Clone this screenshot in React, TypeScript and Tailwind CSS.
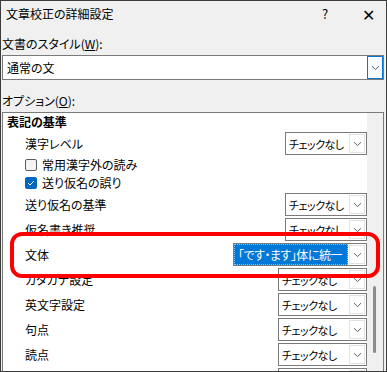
import React from "react";

type Row =
  | { kind: "header"; label: string }
  | { kind: "select"; label: string; value: string; width: number; selected?: boolean }
  | { kind: "check"; label: string; checked: boolean };

const rows: Row[] = [
  { kind: "header", label: "表記の基準" },
  { kind: "select", label: "漢字レベル", value: "チェックなし", width: 82 },
  { kind: "check", label: "常用漢字外の読み", checked: false },
  { kind: "check", label: "送り仮名の誤り", checked: true },
  { kind: "select", label: "送り仮名の基準", value: "チェックなし", width: 82 },
  { kind: "select", label: "仮名書き推奨", value: "チェックなし", width: 82 },
  { kind: "select", label: "文体", value: "「です・ます」体に統一", width: 134, selected: true },
  { kind: "select", label: "カタカナ設定", value: "チェックなし", width: 89 },
  { kind: "select", label: "英文字設定", value: "チェックなし", width: 89 },
  { kind: "select", label: "句点", value: "チェックなし", width: 89 },
  { kind: "select", label: "読点", value: "チェックなし", width: 89 },
  { kind: "select", label: "記号の使い方", value: "チェックなし", width: 89 },
];

function Chevron() {
  return (
    <svg width="9" height="6" viewBox="0 0 9 6" fill="none">
      <path d="M1 1.2 L4.5 4.6 L8 1.2" stroke="#606060" strokeWidth="1" />
    </svg>
  );
}

function Select({ value, width, selected }: { value: string; width: number; selected?: boolean }) {
  return (
    <div
      className="flex h-[23px] border border-[#7a7a7a] bg-white text-[11px] tracking-[-0.5px]"
      style={{ width }}
    >
      {selected ? (
        <div className="flex-1 flex items-center pl-[3px] bg-[#0078d7] text-white text-[12px] border border-dotted border-[#9cc3ea] whitespace-nowrap overflow-hidden">
          {value}
        </div>
      ) : (
        <div className="flex-1 flex items-center pl-[3px] whitespace-nowrap overflow-hidden">{value}</div>
      )}
      <div className="w-[16px] m-px border border-[#e2e2e2] bg-white flex items-center justify-center">
        <Chevron />
      </div>
    </div>
  );
}

function CheckBox({ checked }: { checked: boolean }) {
  if (checked) {
    return (
      <div className="w-[12px] h-[12px] rounded-[2px] bg-[#0067c0] flex items-center justify-center">
        <svg width="8" height="6" viewBox="0 0 8 6" fill="none">
          <path d="M1 3 L3 5 L7 1" stroke="white" strokeWidth="1" />
        </svg>
      </div>
    );
  }
  return <div className="w-[12px] h-[12px] rounded-[2px] border border-[#5c5c5c] bg-[#f4f4f4]" />;
}

export default function App() {
  return (
    <div className="relative w-[387px] h-[372px] overflow-hidden bg-[#f0f0f0] border border-[#3c3c3c] text-[12px] leading-[16px] text-black font-['Meiryo_UI','Noto_Sans_CJK_JP',sans-serif] [font-feature-settings:'palt']">
      {/* タイトルバー */}
      <div className="flex items-center h-[26px] pl-[5px]">
        <span className="flex-1">文章校正の詳細設定</span>
        <span className="w-[40px] text-[13px]">?</span>
        <span className="w-[24px] text-[16px] font-light">✕</span>
      </div>

      {/* 文書のスタイル */}
      <div className="h-[28px] pt-[9px] pl-[1px]">
        文書のスタイル(<span className="underline">W</span>):
      </div>
      <div className="ml-[1px] w-[382px] h-[25px] flex border border-[#7a7a7a] bg-white">
        <div className="flex-1 flex items-center pl-[4px]">通常の文</div>
        <div className="w-[16px] border border-[#0078d7] bg-[#f7fbff] flex items-center justify-center">
          <Chevron />
        </div>
      </div>

      {/* オプション */}
      <div className="h-[32px] pt-[13px] pl-[1px]">
        オプション(<span className="underline">O</span>):
      </div>
      <div className="ml-[1px] w-[382px] h-[300px] flex border border-[#7a7a7a] bg-white">
        <div className="flex-1 flex flex-col">
          {rows.map((row, i) => {
            if (row.kind === "header") {
              return (
                <div key={i} className="h-[18px] flex items-center pl-[4px] font-bold">
                  {row.label}
                </div>
              );
            }
            if (row.kind === "check") {
              return (
                <div key={i} className="h-[18px] flex items-center gap-[5px] pl-[22px]">
                  <CheckBox checked={row.checked} />
                  <span>{row.label}</span>
                </div>
              );
            }
            return (
              <div key={i} className="h-[25px] flex items-center justify-between pl-[22px]">
                <span>{row.label}</span>
                <Select value={row.value} width={row.width} selected={row.selected} />
              </div>
            );
          })}
        </div>
        {/* スクロールバー */}
        <div className="w-[16px] bg-[#f0f0f0] flex flex-col">
          <div className="mt-[173px] ml-[6px] w-[3px] h-[67px] rounded-full bg-[#8b8b8b]" />
        </div>
      </div>

      {/* 強調枠 */}
      <div className="absolute left-[9px] top-[231px] w-[370px] h-[46px] border-[4px] border-[#ff0000] rounded-[12px] pointer-events-none" />
    </div>
  );
}
